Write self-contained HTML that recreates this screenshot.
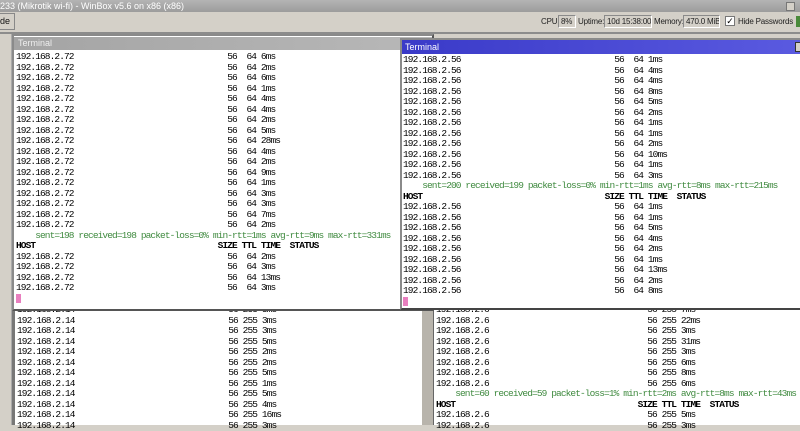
<!DOCTYPE html>
<html><head><style>
*{margin:0;padding:0;box-sizing:border-box}
body{width:800px;height:425px;overflow:hidden;background:#d4d0c8;position:relative;font-family:"Liberation Sans",sans-serif}
.abs{position:absolute}
pre{position:absolute;font-family:"Liberation Mono",monospace;font-size:9.5px;letter-spacing:-0.9px;line-height:10.5px;color:#000;white-space:pre}
.g{color:#3f8a3f}
.b{font-weight:bold}
.cur{display:inline-block;width:5px;height:9px;background:#e87fbf;vertical-align:-1px}
.box{position:absolute;top:15px;height:13px;border:1px solid #8a8a8a;border-right-color:#fff;border-bottom-color:#fff;font-size:8px;line-height:11px;padding-left:2px;color:#222;background:#d4d0c8;white-space:nowrap;overflow:hidden;letter-spacing:-0.2px}
.lbl{position:absolute;top:16px;font-size:8px;line-height:11px;color:#222;white-space:nowrap;letter-spacing:-0.2px}
</style></head><body>
<div class="abs" style="left:0;top:0;width:800px;height:12px;background:linear-gradient(#b4b4b4,#9c9c9c);color:#fff;font-size:9px;line-height:12px;white-space:nowrap">233 (Mikrotik wi-fi) - WinBox v5.6 on x86 (x86)</div>
<div class="abs" style="left:786px;top:2px;width:9px;height:9px;background:#d4d0c8;border:1px solid #777"></div>
<div class="abs" style="left:0;top:13px;width:15px;height:17px;border:1px solid #888;border-left:none;font-size:9px;line-height:15px;color:#111">de</div>
<div class="lbl" style="left:541px">CPU:</div><div class="box" style="left:558px;width:18px">8%</div>
<div class="lbl" style="left:578px">Uptime:</div><div class="box" style="left:604px;width:48px">10d 15:38:00</div>
<div class="lbl" style="left:654px">Memory:</div><div class="box" style="left:683px;width:37px">470.0 MiB</div>
<div class="abs" style="left:725px;top:16px;width:10px;height:10px;background:#fff;border:1px solid #777;font-size:9px;line-height:8px;text-align:center">✓</div>
<div class="lbl" style="left:738px">Hide Passwords</div>
<div class="abs" style="left:796px;top:16px;width:4px;height:11px;background:#4a8a3a"></div>
<div class="abs" style="left:0;top:32px;width:800px;height:2px;background:#8c8c8c"></div>

<!-- background left terminal -->
<div class="abs" style="left:12px;top:300px;width:410px;height:125px;background:#fff;border-left:3px solid #777"></div>
<pre style="left:17px;top:305px">192.168.2.14                                56 255 3ms
192.168.2.14                                56 255 3ms
192.168.2.14                                56 255 3ms
192.168.2.14                                56 255 5ms
192.168.2.14                                56 255 2ms
192.168.2.14                                56 255 2ms
192.168.2.14                                56 255 5ms
192.168.2.14                                56 255 1ms
192.168.2.14                                56 255 5ms
192.168.2.14                                56 255 4ms
192.168.2.14                                56 255 16ms
192.168.2.14                                56 255 3ms</pre>
<!-- background right terminal -->
<div class="abs" style="left:422px;top:300px;width:12px;height:125px;background:#b8b4ac;border-right:1px solid #666"></div>
<div class="abs" style="left:434px;top:300px;width:366px;height:125px;background:#fff"></div>
<pre style="left:436px;top:305px">192.168.2.6                                 56 255 7ms
192.168.2.6                                 56 255 22ms
192.168.2.6                                 56 255 3ms
192.168.2.6                                 56 255 31ms
192.168.2.6                                 56 255 3ms
192.168.2.6                                 56 255 6ms
192.168.2.6                                 56 255 8ms
192.168.2.6                                 56 255 6ms
<span class="g">    sent=60 received=59 packet-loss=1% min-rtt=2ms avg-rtt=8ms max-rtt=43ms</span>
<span class="b">HOST                                      SIZE TTL TIME  STATUS</span>
192.168.2.6                                 56 255 5ms
192.168.2.6                                 56 255 3ms</pre>

<!-- left sidebar -->
<div class="abs" style="left:0;top:34px;width:12px;height:391px;background:#d4d0c8;border-right:1px solid #aaa"></div>

<!-- window 1 -->
<div class="abs" style="left:12px;top:34px;width:422px;height:277px;background:#fff;border:2px solid #8a8a8a;border-bottom-color:#555;border-right-color:#555"></div>
<div class="abs" style="left:14px;top:37px;width:418px;height:13px;background:linear-gradient(90deg,#a4a4a4,#b8b8b8);color:#eee;font-size:9px;line-height:13px;padding-left:4px">Terminal</div>
<pre style="left:16px;top:52px">192.168.2.72                                56  64 6ms
192.168.2.72                                56  64 2ms
192.168.2.72                                56  64 6ms
192.168.2.72                                56  64 1ms
192.168.2.72                                56  64 4ms
192.168.2.72                                56  64 4ms
192.168.2.72                                56  64 2ms
192.168.2.72                                56  64 5ms
192.168.2.72                                56  64 28ms
192.168.2.72                                56  64 4ms
192.168.2.72                                56  64 2ms
192.168.2.72                                56  64 9ms
192.168.2.72                                56  64 1ms
192.168.2.72                                56  64 3ms
192.168.2.72                                56  64 3ms
192.168.2.72                                56  64 7ms
192.168.2.72                                56  64 2ms
<span class="g">    sent=198 received=198 packet-loss=0% min-rtt=1ms avg-rtt=9ms max-rtt=331ms</span>
<span class="b">HOST                                      SIZE TTL TIME  STATUS</span>
192.168.2.72                                56  64 2ms
192.168.2.72                                56  64 3ms
192.168.2.72                                56  64 13ms
192.168.2.72                                56  64 3ms
<span class="cur"></span></pre>

<!-- window 2 -->
<div class="abs" style="left:400px;top:38px;width:400px;height:272px;background:#fff;border:2px solid #8a8a8a;border-bottom-color:#444;border-right:none"></div>
<div class="abs" style="left:402px;top:40px;width:398px;height:14px;background:linear-gradient(90deg,#3a3ac8,#5a5ae0);color:#fff;font-size:9px;line-height:14px;padding-left:3px">Terminal</div>
<div class="abs" style="left:795px;top:42px;width:6px;height:10px;background:#d4d0c8;border:1px solid #333"></div>
<pre style="left:403px;top:55px">192.168.2.56                                56  64 1ms
192.168.2.56                                56  64 4ms
192.168.2.56                                56  64 4ms
192.168.2.56                                56  64 8ms
192.168.2.56                                56  64 5ms
192.168.2.56                                56  64 2ms
192.168.2.56                                56  64 1ms
192.168.2.56                                56  64 1ms
192.168.2.56                                56  64 2ms
192.168.2.56                                56  64 10ms
192.168.2.56                                56  64 1ms
192.168.2.56                                56  64 3ms
<span class="g">    sent=200 received=199 packet-loss=0% min-rtt=1ms avg-rtt=8ms max-rtt=215ms</span>
<span class="b">HOST                                      SIZE TTL TIME  STATUS</span>
192.168.2.56                                56  64 1ms
192.168.2.56                                56  64 1ms
192.168.2.56                                56  64 5ms
192.168.2.56                                56  64 4ms
192.168.2.56                                56  64 2ms
192.168.2.56                                56  64 1ms
192.168.2.56                                56  64 13ms
192.168.2.56                                56  64 2ms
192.168.2.56                                56  64 8ms
<span class="cur"></span></pre>
</body></html>
